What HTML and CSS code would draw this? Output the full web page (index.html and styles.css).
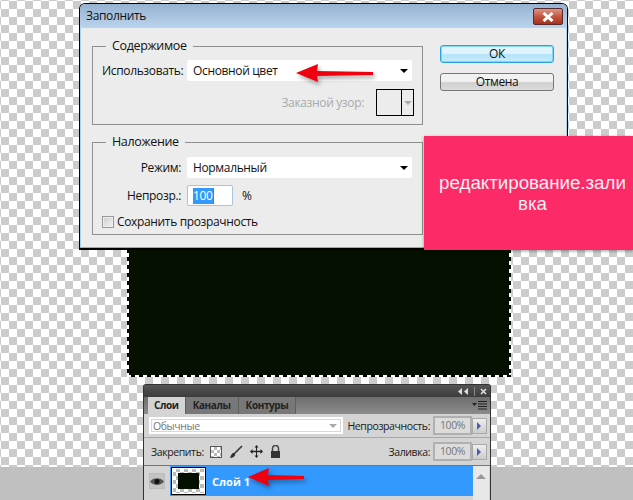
FILE: index.html
```html
<!DOCTYPE html>
<html lang="ru">
  <head>
    <meta charset="UTF-8" />
    <title>Заполнить</title>
    <link rel="stylesheet" href="styles.css">
  </head>
  <body>
    <div class="holst">
      <div class="sloy-chernyy"></div>

      <div class="dialog">
        <div class="zagolovok">
          <span>Заполнить</span>
          <div class="zakryt">
            <svg width="14" height="10" viewBox="0 0 14 10"><path d="M2.500 1 L11.500 9 M11.500 1 L2.500 9" stroke="#fff" stroke-width="3" /></svg>
          </div>
        </div>
        <div class="telo">
          <div class="levo">
            <fieldset class="gruppa gruppa-1">
              <legend>Содержимое</legend>
              <div class="stroka">
                <label>Использовать:</label>
                <div class="vybor"><span>Основной цвет</span><i class="strelka"></i></div>
              </div>
              <div class="stroka-uzor">
                <span class="seryy">Заказной узор:</span>
                <div class="uzor"><div></div><div class="uzor-str"><i class="strelka strelka-ser"></i></div></div>
              </div>
            </fieldset>
            <fieldset class="gruppa gruppa-2">
              <legend>Наложение</legend>
              <div class="stroka">
                <label>Режим:</label>
                <div class="vybor"><span>Нормальный</span><i class="strelka"></i></div>
              </div>
              <div class="stroka stroka-pole">
                <label>Непрозр.:</label>
                <div class="pole"><span class="vydelen">100</span></div>
                <span class="procent">%</span>
              </div>
              <div class="galka"><i></i><span>Сохранить прозрачность</span></div>
            </fieldset>
          </div>
          <div class="knopki">
            <button class="knopka ok">ОК</button>
            <button class="knopka">Отмена</button>
          </div>
        </div>
      </div>

      <svg class="strelka-kr str-1" width="96" height="32" viewBox="0 0 96 32">
        <path d="M4 11 L26 2 L25 9 L81 10 L81 13 L25 14 L26 20 Z" fill="#f0000f" />
      </svg>

      <div class="rozovyy">
        <p>редактирование.заливка</p>
      </div>

      <div class="panel">
        <div class="panel-verh">
          <svg width="12" height="7" viewBox="0 0 12 7"><path d="M5 0 V7 L1 3.500 Z M11 0 V7 L7 3.500 Z" fill="#ddd" /></svg>
          <b class="razd"></b>
          <svg width="7" height="7" viewBox="0 0 7 7"><path d="M1 1 L6 6 M6 1 L1 6" stroke="#ddd" stroke-width="1.600" /></svg>
        </div>
        <div class="vkladki">
          <div class="vkladka aktiv">Слои</div>
          <div class="vkladka">Каналы</div>
          <div class="vkladka">Контуры</div>
          <svg class="menu" width="15" height="9" viewBox="0 0 15 9"><path d="M0 2 H5 L2.500 5 Z" fill="#222" /><path d="M6 .5 H15 M6 3 H15 M6 5.500 H15 M6 8 H15" stroke="#222" /></svg>
        </div>
        <div class="ryad ryad-1">
          <div class="kombo"><span>Обычные</span><i class="strelka strelka-ser"></i></div>
          <span class="podpis">Непрозрачность:</span>
          <div class="znach">100%</div>
          <div class="plus"></div>
        </div>
        <div class="ryad ryad-2">
          <span class="podpis">Закрепить:</span>
          <div class="zamki">
            <i class="z-shah"></i>
            <svg width="14" height="14" viewBox="0 0 14 14"><path d="M13 1 L6 8" stroke="#333" stroke-width="1.600" /><path d="M1 13 C2 9 4 7 6 8 C7 10 5 13 1 13 Z" fill="#333" /></svg>
            <svg width="13" height="13" viewBox="0 0 13 13"><path d="M6.500 0 L8.500 2.500 H7 V5.800 H10.500 V4 L13 6.500 L10.500 9 V7.200 H7 V10.500 H8.500 L6.500 13 L4.500 10.500 H6 V7.200 H2.500 V9 L0 6.500 L2.500 4 V5.800 H6 V2.500 H4.500 Z" fill="#222" /></svg>
            <svg width="11" height="13" viewBox="0 0 11 13"><path d="M2.500 6 V3.500 A3 3 0 0 1 8.500 3.500 V6" fill="none" stroke="#444" stroke-width="1.500" /><rect x="1" y="6" width="9" height="7" fill="#333" /></svg>
          </div>
          <span class="podpis podpis-zal">Заливка:</span>
          <div class="znach">100%</div>
          <div class="plus"></div>
        </div>
        <div class="sloi">
          <div class="glaz">
            <div class="glaz-kn">
              <svg width="14" height="9" viewBox="0 0 14 9"><path d="M0 4.500 C3 0 11 0 14 4.500 C11 9 3 9 0 4.500 Z" fill="#555" /><circle cx="7" cy="4.500" r="2.500" fill="#111" /></svg>
            </div>
          </div>
          <div class="sloy-vybran">
            <div class="mini"><div></div></div>
            <span>Слой 1</span>
            <svg class="strelka-kr str-2" width="62" height="26" viewBox="0 0 62 26">
              <path d="M1 11 L22 2 L21 9 L57 10 L57 13 L21 14 L22 20 Z" fill="#f0000f" />
            </svg>
          </div>
          <div class="skroll"><i class="strelka-verh"></i></div>
        </div>
      </div>
    </div>
  </body>
</html>
```

FILE: styles.css
```css
* {
  margin: 0;
  padding: 0;
  box-sizing: border-box;
}

body {
  width: 633px;
  height: 500px;
  overflow: hidden;
  background-color: #c0c0c0;
  font-family: "Open Sans", "Noto Sans", sans-serif;
  font-size: 12px;
  letter-spacing: -0.35px;
  color: #111;
}

/* ---------ФОН------------*/
.holst {
  position: relative;
  width: 633px;
  height: 500px;
}

.holst::before {
  content: "";
  display: block;
  height: 467px;
  background-color: #fff;
  background-image: conic-gradient(#ccc 25%, #fff 0 50%, #ccc 0 75%, #fff 0);
  background-size: 16px 16px;
  background-position: 1px 1px;
}

/* пунктир выделения */
.sloy-chernyy {
  position: absolute;
  left: 127px;
  top: 230px;
  width: 384px;
  height: 147px;
  background-color: #061000;
  background-image:
    repeating-linear-gradient(90deg, #fff 0 4px, #000 4px 8px),
    repeating-linear-gradient(90deg, #fff 0 4px, #000 4px 8px),
    repeating-linear-gradient(0deg, #fff 0 4px, #000 4px 8px),
    repeating-linear-gradient(0deg, #fff 0 4px, #000 4px 8px);
  background-size: 100% 2px, 100% 2px, 2px 100%, 2px 100%;
  background-position: top left, bottom left, top left, top right;
  background-repeat: no-repeat;
}

/* ---------ДИАЛОГ------------*/
.dialog {
  position: absolute;
  left: 79px;
  top: 3px;
  width: 489px;
  height: 247px;
  border: 1px solid #000;
  border-bottom: 2px solid #000;
  border-radius: 6px 6px 0 0;
  background-color: #ececec;
  box-shadow: inset 0 -1px 0 #5fc0ea, inset 1px 0 0 #a9d3ee, inset -1px 0 0 #a9d3ee;
}

.zagolovok {
  display: flex;
  justify-content: space-between;
  height: 24px;
  padding: 4px 4px 0 6px;
  font-size: 12px;
  line-height: 16px;
  background: linear-gradient(#97b2d1, #bad4ee);
  border-radius: 5px 5px 0 0;
}

.zakryt {
  display: flex;
  align-items: center;
  justify-content: center;
  width: 30px;
  height: 17px;
  border: 1px solid #5a2b2b;
  border-radius: 2px;
  background: linear-gradient(#d99488, #c4563f 50%, #a5301f);
}

.telo {
  display: flex;
  padding: 9px 13px 0 12px;
}

.levo {
  width: 331px;
  margin-right: 17px;
}

.gruppa {
  border: 1.500px solid #8f8f8f;
  padding: 0 9px;
}

.gruppa legend {
  margin-left: 4px;
  padding: 0 6px;
  font-size: 12.500px;
  line-height: 18px;
}

.gruppa-1 {
  height: 88px;
}

.gruppa-2 {
  height: 102px;
  margin-top: 8px;
}

.stroka {
  display: flex;
  align-items: center;
  height: 21px;
  margin-top: 6px;
}

.gruppa-1 .stroka {
  margin-top: 5px;
}

.stroka-pole {
  margin-top: 7px;
}

.stroka label {
  width: 85px;
  padding-right: 6px;
  text-align: right;
  white-space: nowrap;
}

.vybor {
  display: flex;
  align-items: center;
  justify-content: space-between;
  width: 225px;
  height: 21px;
  padding: 0 4px 0 6px;
  background-color: #fff;
  border-radius: 2px;
}

.strelka {
  display: block;
  width: 0;
  height: 0;
  border-left: 4px solid transparent;
  border-right: 4px solid transparent;
  border-top: 4px solid #000;
}

.strelka-ser {
  border-top-color: #aaa;
}

.stroka-uzor {
  display: flex;
  align-items: center;
  justify-content: flex-end;
  margin-top: 8px;
  margin-right: -1px;
}

.seryy {
  color: #aaa;
  margin-right: 12px;
}

.uzor {
  display: flex;
  width: 38px;
  height: 27px;
  border: 1px solid #000;
}

.uzor div:first-child {
  flex: 1;
  border-right: 1px solid #000;
}

.uzor-str {
  display: flex;
  align-items: center;
  justify-content: center;
  width: 11px;
}

.pole {
  width: 46px;
  height: 21px;
  padding: 2px 5px;
  line-height: 16px;
  background-color: #fff;
  border: 1px solid #a8c4de;
  border-radius: 2px;
}

.vydelen {
  display: inline-block;
  background-color: #3399ff;
  color: #fff;
  border-right: 1px solid #d55a00;
}

.procent {
  margin-left: 9px;
}

.galka {
  display: flex;
  align-items: center;
  margin-top: 7px;
}

.galka i {
  width: 12px;
  height: 12px;
  margin-right: 3px;
  border: 1px solid #999;
  background: linear-gradient(135deg, #ccc, #f4f4f4);
  box-shadow: inset 0 0 0 1px #eee;
}

.knopki {
  display: flex;
  flex-direction: column;
  gap: 10px;
  padding-top: 8px;
}

.knopka {
  width: 114px;
  height: 18px;
  font-family: "Open Sans", "Noto Sans", sans-serif;
  font-size: 12px;
  letter-spacing: -0.35px;
  line-height: 14px;
  color: #111;
  border: 1px solid #777;
  border-radius: 3px;
  background: linear-gradient(#f2f2f2 45%, #cfcfcf 55%, #dcdcdc);
}

.ok {
  border-color: #2aa3dc;
  box-shadow: inset 0 0 0 1px #7ed6fa;
  background: linear-gradient(#e0f4fd 45%, #b3e3f9 55%, #c8edfc);
}

/* ---------СТРЕЛКИ И РОЗОВЫЙ БЛОК------------*/
.strelka-kr {
  position: absolute;
  filter: drop-shadow(2px 3px 2px rgba(0, 0, 0, .35));
}

.str-1 {
  left: 292px;
  top: 62px;
}

.rozovyy {
  position: absolute;
  left: 424px;
  top: 136px;
  display: flex;
  align-items: center;
  justify-content: center;
  width: 209px;
  height: 114px;
  padding: 0 6px 0 14px;
  background-color: #fc2a66;
  box-shadow: 0 1px 3px rgba(0, 0, 0, .4);
}

.rozovyy p {
  width: 100%;
  text-align: center;
  word-break: break-all;
  font-family: "Liberation Sans", sans-serif;
  font-size: 18.720px;
  letter-spacing: 0;
  line-height: 21px;
  color: #fdf0f4;
}

/* ---------ПАНЕЛЬ СЛОЕВ------------*/
.panel {
  position: absolute;
  left: 143px;
  top: 384px;
  width: 348px;
  height: 116px;
  border: 1px solid #333;
  border-bottom: 0;
  border-radius: 3px 3px 0 0;
  background-color: #d4d4d4;
}

.panel-verh {
  display: flex;
  align-items: center;
  justify-content: flex-end;
  gap: 5px;
  height: 12px;
  padding-right: 3px;
  background: linear-gradient(#555, #3c3c3c);
}

.razd {
  width: 1px;
  height: 9px;
  background-color: #888;
}

.vkladki {
  position: relative;
  display: flex;
  height: 17px;
  padding-left: 4px;
  background: linear-gradient(#6e6e6e, #8c8c8c);
}

.vkladka {
  padding: 0 7px;
  line-height: 17px;
  font-size: 10px;
  font-weight: 700;
  letter-spacing: -0.4px;
  color: #222;
  background-color: #787878;
  border-right: 1px solid #5f5f5f;
}

.aktiv {
  background-color: #d4d4d4;
  padding: 0 6px;
}

.menu {
  position: absolute;
  right: 3px;
  top: 4px;
}

.ryad {
  display: flex;
  align-items: center;
  height: 24px;
  padding: 0 3px 0 5px;
  font-size: 10.500px;
  letter-spacing: -0.4px;
  border-bottom: 1px solid #a8a8a8;
}

.ryad-2 {
  height: 28px;
  padding-left: 7px;
  border-bottom: 1px solid #777;
}

.kombo {
  display: flex;
  align-items: center;
  justify-content: space-between;
  width: 194px;
  height: 17px;
  padding: 0 6px 0 4px;
  color: #777;
  background-color: #fff;
  box-shadow: inset 0 0 0 2px #fff, inset 0 0 0 3px #d8d8d8;
}

.podpis {
  margin-left: auto;
  margin-right: 4px;
  color: #1a1a1a;
  white-space: nowrap;
}

.ryad-2 > .podpis:first-child {
  margin-left: 0;
}

.zamki {
  display: flex;
  align-items: center;
  gap: 7px;
  margin-left: 2px;
}

.z-shah {
  width: 12px;
  height: 12px;
  border: 1px solid #555;
  background-color: #fff;
  background-image: conic-gradient(#bbb 25%, #fff 0 50%, #bbb 0 75%, #fff 0);
  background-size: 6px 6px;
}

.znach {
  width: 37px;
  height: 17px;
  line-height: 15px;
  text-align: center;
  color: #777;
  background-color: #dcdcdc;
  border: 1px solid #fff;
  outline: 2px solid #b0b0b0;
  outline-offset: -1px;
}

.plus {
  position: relative;
  width: 15px;
  height: 16px;
  margin-left: 1px;
  border: 1px solid #aaa;
  background: linear-gradient(#eee, #ccc);
}

.plus::after {
  content: "";
  position: absolute;
  left: 4px;
  top: 3px;
  border-top: 4px solid transparent;
  border-bottom: 4px solid transparent;
  border-left: 4px solid #4a5fb0;
}

.sloi {
  display: flex;
  height: 35px;
}

.glaz {
  display: flex;
  align-items: center;
  width: 26px;
  height: 30px;
  padding-left: 5px;
}

.glaz-kn {
  display: flex;
  align-items: center;
  justify-content: center;
  width: 16px;
  height: 16px;
  background-color: #c4c4c4;
  box-shadow: inset 0 0 0 1px #bbb;
}

.sloy-vybran {
  position: relative;
  display: flex;
  align-items: center;
  width: 303px;
  height: 30px;
  padding-left: 1px;
  background-color: #3399ff;
  color: #fff;
  font-size: 11px;
  font-weight: 700;
  letter-spacing: 0;
}

.mini {
  display: flex;
  align-items: center;
  justify-content: center;
  width: 35px;
  height: 28px;
  margin-right: 6px;
  border: 1px solid #000;
  outline: 1px solid #fff;
  outline-offset: -2px;
  background-color: #fff;
  background-image: conic-gradient(#bbb 25%, #fff 0 50%, #bbb 0 75%, #fff 0);
  background-size: 8px 8px;
}

.mini div {
  width: 21px;
  height: 16px;
  background-color: #061000;
}

.str-2 {
  left: 77px;
  top: 0;
}

.skroll {
  display: flex;
  justify-content: center;
  width: 16px;
  padding-top: 8px;
  background-color: #e8e8e8;
}

.strelka-verh {
  width: 0;
  height: 0;
  border-left: 5px solid transparent;
  border-right: 5px solid transparent;
  border-bottom: 5px solid #999;
}
```
